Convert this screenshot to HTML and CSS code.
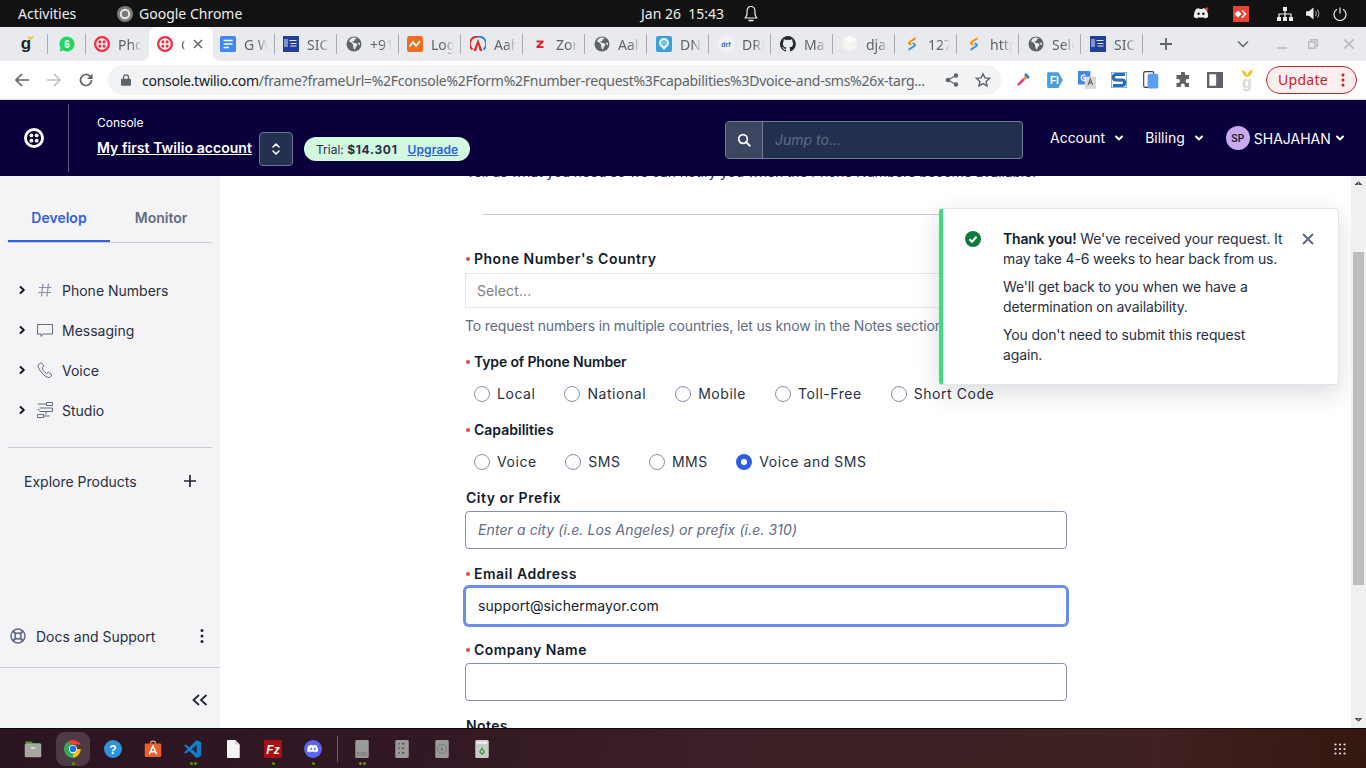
FILE: index.html
```html
<!DOCTYPE html>
<html lang="en">
<head>
<meta charset="utf-8">
<title>Twilio Console</title>
<link rel="stylesheet" href="styles.css">
</head>
<body>
<svg class="defs" width="0" height="0" aria-hidden="true">
  <defs>
    <symbol id="twilio" viewBox="0 0 16 16"><path fill="currentColor" fill-rule="evenodd" d="M8 0a8 8 0 1 0 0 16A8 8 0 0 0 8 0Zm0 13.7A5.7 5.7 0 1 1 8 2.3a5.7 5.7 0 0 1 0 11.4Z"/><circle fill="currentColor" cx="5.9" cy="5.9" r="1.55"/><circle fill="currentColor" cx="10.1" cy="5.9" r="1.55"/><circle fill="currentColor" cx="5.9" cy="10.1" r="1.55"/><circle fill="currentColor" cx="10.1" cy="10.1" r="1.55"/></symbol>
    <symbol id="globe" viewBox="0 0 16 16"><circle cx="8" cy="8" r="7.5" fill="#5f6368"/><path fill="#e8eaed" d="M7 1.6 4.2 3 3 5.6l2.6 1.2 1.4 1.8 .2 2.4 1 2.6.9-.3.8-2.4 1.7-1.9-1.2-1.7-2.9-.6L6 5.6l2.2-.4L9 3.2l1.9-.8A6.8 6.8 0 0 0 7 1.6Zm6.5 5-1.7.3.9 1.6.9.9.5-1.2a6 6 0 0 0-.6-1.6Z"/></symbol>
    <symbol id="swirl" viewBox="0 0 16 16"><path fill="#f29111" d="M11.5 1 5 5.2c-1.5 1-1.3 2.6 0 3.4l1.5.9 1.6-1L6.6 7.6c-.4-.3-.4-.7 0-1l4.9-3.2Z"/><path fill="#3a9bdc" d="M4.5 15 11 10.8c1.5-1 1.3-2.6 0-3.4l-1.5-.9-1.6 1 1.5.9c.4.3.4.7 0 1l-4.9 3.2Z"/></symbol>
    <symbol id="sic" viewBox="0 0 16 16"><rect width="16" height="16" fill="#22409a"/><path stroke="#dfe6f5" stroke-width="1" fill="none" d="M2 3v8M4 3v8M6.500 4.500h7M7.500 7.500h6M7.500 10h6"/></symbol>
    <symbol id="chev" viewBox="0 0 10 10"><path d="M2 3.500 5 6.500l3-3" fill="none" stroke="currentColor" stroke-width="2" stroke-linecap="round" stroke-linejoin="round"/></symbol>
    <symbol id="chevr" viewBox="0 0 10 10"><path d="M3.500 2 6.800 5 3.500 8" fill="none" stroke="currentColor" stroke-width="2" stroke-linecap="round" stroke-linejoin="round"/></symbol>
  </defs>
</svg>

<header class="os-bar">
  <span class="os-activities">Activities</span>
  <span class="os-app">
    <svg class="i16" viewBox="0 0 16 16"><circle cx="8" cy="8" r="8" fill="#7b7b7b"/><circle cx="8" cy="8" r="4.200" fill="none" stroke="#e8e8e8" stroke-width="2"/></svg>
    Google Chrome
  </span>
  <span class="os-clock">Jan 26&nbsp; 15:43</span>
  <svg class="os-bell" viewBox="0 0 16 18"><path d="M8 1.500c-3 0-4 2.500-4 5v3L2.300 13h11.400L12 9.500v-3c0-2.500-1-5-4-5Z" fill="none" stroke="#eee" stroke-width="1.200"/><path d="M5.500 15.500h5" stroke="#eee" stroke-width="1.600"/></svg>
  <span class="os-tray">
    <svg class="tray-discord" viewBox="0 0 18 14"><path fill="#eee" d="M3.400 2C5 1 6.500.9 7 1.200l.4.700h3.200l.4-.7c.6-.3 2 0 3.600.8 1.800 3 2.600 6 2.400 9-1.400 1-2.700 1.500-3.800 1.700l-.9-1.400c.6-.2 1-.4 1.500-.7-2.800 1.300-6.800 1.300-9.600 0 .5.300 1 .5 1.500.7l-.9 1.400C3.600 12.500 2.300 12 .9 11 .7 8 1.600 5 3.400 2Z"/><circle cx="6.300" cy="7.300" r="1.400" fill="#111"/><circle cx="11.700" cy="7.300" r="1.400" fill="#111"/><circle cx="15.500" cy="1.800" r="1.800" fill="#e53935"/></svg>
    <svg class="tray-red" viewBox="0 0 16 16"><rect width="16" height="16" fill="#ea4335"/><path fill="#fff" d="m5 4.500 3.500 3.500L5 11.500 1.500 8Z"/><path d="m9 4.500 3.500 3.500L9 11.500" fill="none" stroke="#fff" stroke-width="1.500"/></svg>
    <svg class="tray-net" viewBox="0 0 16 14"><path fill="#eee" d="M6 0h4v4H6zM0 10h4v4H0zM12 10h4v4h-4zM6 10h4v4H6z"/><path d="M8 4v6M2 10V7h12v3" fill="none" stroke="#eee" stroke-width="1.200"/></svg>
    <svg class="tray-vol" viewBox="0 0 16 14"><path fill="#eee" d="M0 4.500h3L8 .5v13l-5-4H0Z"/><path d="M10 4.500a3.500 3.500 0 0 1 0 5M12 2.500a6.500 6.500 0 0 1 0 9" fill="none" stroke="#999" stroke-width="1.200"/></svg>
    <svg class="tray-pow" viewBox="0 0 14 14"><path d="M4 2.300a6 6 0 1 0 6 0M7 .5v6" fill="none" stroke="#eee" stroke-width="1.200"/></svg>
  </span>
</header>

<div class="tabstrip">
  <div class="tab pin-g">
    <svg class="fav-g-svg" viewBox="0 0 18 18"><text x="8" y="14" class="fav-g">g</text><path d="M10.500 4.500 9.500 1l3 1.500L16 .5l-2 4Z" fill="#e8c93a"/></svg>
  </div>
  <div class="tab pin-w">
    <svg class="i16" viewBox="0 0 16 16"><path d="M8 .5a7.500 7.500 0 0 0-6.400 11.400L.6 15.500l3.700-1A7.500 7.500 0 1 0 8 .5Z" fill="#25d366"/><text x="8" y="11.500" class="fav-6">6</text></svg>
  </div>
  <div class="tab nosep"><svg class="i16 tw-red"><use href="#twilio"/></svg><span class="tab-t">Phone Numbers</span></div>
  <div class="tab active">
    <svg class="i16 tw-red"><use href="#twilio"/></svg><span class="tab-t">Console</span>
    <svg class="tab-x" viewBox="0 0 10 10"><path d="m1 1 8 8M9 1l-8 8" stroke="#5f6368" stroke-width="1.500"/></svg>
  </div>
  <div class="tab near7"><svg class="i16" viewBox="0 0 16 16"><rect width="16" height="16" rx="1.500" fill="#4285f4"/><path d="M3.500 4.500h9M3.500 8h9M3.500 11.500h5.500" stroke="#fff" stroke-width="1.500"/></svg><span class="tab-t">G Workspace</span></div>
  <div class="tab near8"><svg class="i16"><use href="#sic"/></svg><span class="tab-t">SICHER</span></div>
  <div class="tab"><svg class="i16"><use href="#globe"/></svg><span class="tab-t">+91 98</span></div>
  <div class="tab near8"><svg class="i16" viewBox="0 0 16 16"><rect width="16" height="16" rx="2.500" fill="#ef6c22"/><path d="m2.500 10.500 3.500-4.500 3 4 4-5" fill="none" stroke="#fff" stroke-width="1.800"/></svg><span class="tab-t">Login</span></div>
  <div class="tab"><svg class="i16" viewBox="0 0 16 16"><path d="M2.500 13.500A7.200 7.200 0 0 1 8 .8" fill="none" stroke="#e02a2a" stroke-width="2"/><path d="M8 .8a7.200 7.200 0 0 1 5.500 12.700" fill="none" stroke="#2f86d6" stroke-width="2"/><path d="M8 3 3.500 15h2.700L8 8.500l1.800 6.500h2.700Z" fill="#e02a2a"/></svg><span class="tab-t">Aahaa</span></div>
  <div class="tab"><svg class="i16" viewBox="0 0 16 16"><path d="M4.500 4.500h7v2l-4 3.500h4v2h-7v-2l4-3.500h-4Z" fill="#e42527"/></svg><span class="tab-t">Zoroo</span></div>
  <div class="tab"><svg class="i16"><use href="#globe"/></svg><span class="tab-t">Aahaa</span></div>
  <div class="tab"><svg class="i16" viewBox="0 0 16 16"><rect width="16" height="16" rx="2" fill="#3aa0d8"/><circle cx="8" cy="7" r="5" fill="#e4f2f8"/><circle cx="8" cy="7" r="3" fill="#7ec3d4"/><path d="m5.500 11 2.500 3 2.500-3Z" fill="#e4f2f8"/></svg><span class="tab-t">DNS</span></div>
  <div class="tab"><svg class="i16" viewBox="0 0 16 16"><circle cx="8" cy="8" r="8" fill="#f1f3f4"/><text x="8" y="11" class="fav-drf">drf</text></svg><span class="tab-t">DRF API</span></div>
  <div class="tab"><svg class="i16" viewBox="0 0 16 16"><path fill="#24292f" d="M8 0a8 8 0 0 0-2.500 15.600c.4.100.5-.2.500-.4v-1.400c-2.200.5-2.700-1-2.700-1-.4-.9-.9-1.200-.9-1.200-.7-.5.100-.5.100-.5.800.100 1.200.8 1.200.8.700 1.200 1.900.9 2.300.7.100-.5.300-.9.500-1.100-1.800-.2-3.600-.9-3.600-4 0-.9.300-1.600.8-2.100-.1-.2-.4-1 .1-2.100 0 0 .7-.2 2.200.8a7.600 7.600 0 0 1 4 0c1.500-1 2.200-.8 2.200-.8.400 1.100.2 1.900.1 2.100.5.600.8 1.300.8 2.100 0 3.100-1.900 3.700-3.700 3.900.3.300.6.800.6 1.500v2.200c0 .2.100.5.600.4A8 8 0 0 0 8 0Z"/></svg><span class="tab-t">Main</span></div>
  <div class="tab"><svg class="i16" viewBox="0 0 16 16"><path d="M8 0 15 3.500v8.500L8 16 1 12V3.500Z" fill="#f4f4f1"/><path d="M8 7 1 3.500 8 0l7 3.500Z" fill="#fbfbf9"/></svg><span class="tab-t">django</span></div>
  <div class="tab"><svg class="i16"><use href="#swirl"/></svg><span class="tab-t">127.0.0.1</span></div>
  <div class="tab"><svg class="i16"><use href="#swirl"/></svg><span class="tab-t">https://</span></div>
  <div class="tab"><svg class="i16"><use href="#globe"/></svg><span class="tab-t">Select</span></div>
  <div class="tab"><svg class="i16"><use href="#sic"/></svg><span class="tab-t">SICHER</span></div>
  <svg class="strip-plus" viewBox="0 0 12 12"><path d="M6 0v12M0 6h12" stroke="#5f6368" stroke-width="1.800"/></svg>
  <svg class="strip-down" viewBox="0 0 12 8"><path d="m1 1.500 5 5 5-5" fill="none" stroke="#5f6368" stroke-width="1.500"/></svg>
  <svg class="win-min" viewBox="0 0 10 2"><path d="M0 1h10" stroke="#b8babd" stroke-width="1.500"/></svg>
  <svg class="win-max" viewBox="0 0 10 10"><path d="M3 3V.7h6.300V7H7M.7 3h6.300v6.300H.7Z" fill="none" stroke="#b8babd" stroke-width="1.400"/></svg>
  <svg class="win-close" viewBox="0 0 10 10"><path d="m.5.500 9 9M9.500.5l-9 9" stroke="#b8babd" stroke-width="1.600"/></svg>
</div>

<div class="toolbar">
  <span class="tb"><svg class="i16" viewBox="0 0 16 16"><path d="M15 8H2M8 2 2 8l6 6" fill="none" stroke="#5f6368" stroke-width="1.700"/></svg></span>
  <span class="tb"><svg class="i16" viewBox="0 0 16 16"><path d="M1 8h13M8 2l6 6-6 6" fill="none" stroke="#bdc1c6" stroke-width="1.700"/></svg></span>
  <span class="tb"><svg class="i16" viewBox="0 0 16 16"><path d="M13.500 8a5.500 5.500 0 1 1-1.600-3.900L14 6" fill="none" stroke="#5f6368" stroke-width="1.700"/><path d="M14.500 1.500v5.500H9Z" fill="#5f6368"/></svg></span>
  <div class="omni">
    <svg class="omni-lock" viewBox="0 0 10 12"><path d="M2.500 5V3.300a2.500 2.500 0 0 1 5 0V5" fill="none" stroke="#5f6368" stroke-width="1.300"/><rect y="4.800" width="10" height="7" rx="1" fill="#5f6368"/></svg>
    <span class="omni-url"><b>console.twilio.com</b>/frame?frameUrl=%2Fconsole%2Fform%2Fnumber-request%3Fcapabilities%3Dvoice-and-sms%26x-targ...</span>
    <svg class="omni-share" viewBox="0 0 14 14"><circle cx="11" cy="2.500" r="2.200" fill="#5f6368"/><circle cx="3" cy="7" r="2.200" fill="#5f6368"/><circle cx="11" cy="11.500" r="2.200" fill="#5f6368"/><path d="M11 2.500 3 7l8 4.500" fill="none" stroke="#5f6368" stroke-width="1.300"/></svg>
    <svg class="omni-star" viewBox="0 0 16 16"><path d="m8 1.800 1.900 4.100 4.500.5-3.300 3 .9 4.400L8 11.600l-4 2.200.9-4.400-3.300-3 4.500-.5Z" fill="none" stroke="#5f6368" stroke-width="1.400"/></svg>
  </div>
  <div class="exts">
    <span class="tb"><svg class="i16" viewBox="0 0 16 16"><path d="m2 14 1-3 5-5 2 2-5 5Z" fill="#e8487c"/><path d="m8 6 3-3 2 2-3 3Z" fill="#e8873a"/><path d="m10 2 4 4" stroke="#2f80c8" stroke-width="2.500"/></svg></span>
    <span class="tb"><svg class="i18" viewBox="0 0 16 16"><path d="M2 1h9l4 7-4 7H2a1 1 0 0 1-1-1V2a1 1 0 0 1 1-1Z" fill="#4a9fdc"/><text x="7.500" y="11.800" class="ext-fi">FI</text></svg></span>
    <span class="tb"><svg class="i18" viewBox="0 0 16 16"><rect width="11" height="12" fill="#4285f4"/><rect x="6" y="5" width="10" height="11" fill="#d9d9d9"/><path d="M9 12.500 11 7l2 5.500M9.800 10.500h2.500" fill="none" stroke="#666" stroke-width="1"/><path d="M8 3.500A2.500 2.500 0 1 0 8 8V5.800H5.800" fill="none" stroke="#fff" stroke-width="1.200" transform="translate(-1.500 .3)"/></svg></span>
    <span class="tb"><svg class="i16" viewBox="0 0 16 16"><rect width="16" height="16" fill="#fff" stroke="#2d6cb0" stroke-width="1"/><path d="M14 2.500H5C1.500 2.500 1.500 8 5 8h6c3.500 0 3.500 5.500 0 5.500H2" fill="none" stroke="#2d6cb0" stroke-width="3.200"/></svg></span>
    <span class="tb"><svg class="i18" viewBox="0 0 16 16"><rect x="1.500" y=".5" width="9" height="14" rx="1.500" fill="#fff" stroke="#3c4043"/><rect x="5" y="2.500" width="9.500" height="13" rx="1.500" fill="#5b9df0"/></svg></span>
    <span class="tb"><svg class="i16" viewBox="0 0 16 16"><path fill="#5f6368" d="M6 1.500a2 2 0 0 1 4 0V3h4v4h-1.500a2 2 0 0 0 0 4H14v4H9.800v-1.500a2 2 0 0 0-4 0V15H1.500v-4H3a2 2 0 0 0 0-4H1.500V3H6Z"/></svg></span>
    <span class="tb"><svg class="i16" viewBox="0 0 14 14"><path fill="#5f6368" fill-rule="evenodd" d="M0 0h14v14H0Zm2 2v10h6V2Z"/></svg></span>
    <span class="tb"><svg class="ext-g-svg" viewBox="0 0 16 22"><path d="M8 8C6 8 3.500 5 3 1c3 .5 5 3.500 5 7Zm0 0c0-4 2.500-6 5.500-7.500C14 4 11 8 8 8Z" fill="#f0c419"/><text x="8" y="19" class="ext-g">g</text></svg></span>
  </div>
  <div class="update"><span class="update-t">Update</span>
    <svg class="update-dots" viewBox="0 0 4 14"><circle cx="2" cy="2" r="1.500"/><circle cx="2" cy="7" r="1.500"/><circle cx="2" cy="12" r="1.500"/></svg>
  </div>
</div>

<div class="tw-header">
  <svg class="tw-logo"><use href="#twilio"/></svg>
  <div class="tw-account">
    <span class="tw-console">Console</span>
    <a class="tw-name">My first Twilio account</a>
  </div>
  <span class="tw-switch"><svg viewBox="0 0 8 14" width="8" height="14"><path d="M1 5 4 2l3 3M1 9l3 3 3-3" fill="none" stroke="#fff" stroke-width="1.500" stroke-linecap="round" stroke-linejoin="round"/></svg></span>
  <div class="tw-trial">Trial: <b>$14.301</b><a>Upgrade</a></div>
  <div class="tw-search">
    <span class="tw-search-ic"><svg viewBox="0 0 14 14" width="14" height="14"><circle cx="6" cy="6" r="4.300" fill="none" stroke="#fff" stroke-width="1.700"/><path d="m9.200 9.200 3.500 3.500" stroke="#fff" stroke-width="1.900" stroke-linecap="round"/></svg></span>
    <span class="tw-search-ph">Jump to...</span>
  </div>
  <span class="tw-menu m-account">Account<svg class="chev-s"><use href="#chev"/></svg></span>
  <span class="tw-menu m-billing">Billing<svg class="chev-s"><use href="#chev"/></svg></span>
  <span class="tw-avatar">SP</span>
  <span class="tw-menu m-user">SHAJAHAN<svg class="chev-s"><use href="#chev"/></svg></span>
</div>

<div class="main">
  <aside class="side">
    <div class="side-tabs">
      <span class="side-tab on">Develop</span>
      <span class="side-tab">Monitor</span>
    </div>
    <nav class="side-nav">
      <div class="nav-item"><svg class="nav-chev"><use href="#chevr"/></svg><svg class="nav-ic" viewBox="0 0 16 16"><path d="M6 1.500 4.500 14.500M11.500 1.500 10 14.500M1.800 5.500h12.700M1.200 10.500h12.700" fill="none" stroke="#8891aa" stroke-width="1.200"/></svg>Phone Numbers</div>
      <div class="nav-item"><svg class="nav-chev"><use href="#chevr"/></svg><svg class="nav-ic" viewBox="0 0 16 16"><path d="M.5 2.500h15v9.500H6l-2 2.500V12H.5Z" fill="none" stroke="#606b85" stroke-width="1"/></svg>Messaging</div>
      <div class="nav-item"><svg class="nav-chev"><use href="#chevr"/></svg><svg class="nav-ic" viewBox="0 0 16 16"><path d="M3.800.8 1 3c-.5 1.500 1.500 5 4 8s5.500 4.800 7.500 4.500l2.500-2.300-3.500-3-2 1.300c-1.200-.5-2.300-1.800-3.200-3S5.500 6 5.500 5l1.600-1.300Z" fill="none" stroke="#606b85" stroke-width="1"/></svg>Voice</div>
      <div class="nav-item"><svg class="nav-chev"><use href="#chevr"/></svg><svg class="nav-ic" viewBox="0 0 16 16"><path d="M9.500.5h6v3h-6ZM.5 2h9M2.500 6h13v3.500h-13M.5 7.800h2M.5 12.500h6v3h-6ZM6.500 14h6M9 9.500v3" fill="none" stroke="#606b85" stroke-width="1"/></svg>Studio</div>
    </nav>
    <div class="side-rule"></div>
    <div class="explore">Explore Products<svg viewBox="0 0 12 12" width="12" height="12"><path d="M6 0v12M0 6h12" stroke="#1f2535" stroke-width="1.700"/></svg></div>
    <div class="docs">
      <svg class="docs-ic" viewBox="0 0 16 16"><circle cx="8" cy="8" r="7" fill="none" stroke="#606b85" stroke-width="1.500"/><circle cx="8" cy="8" r="3" fill="none" stroke="#606b85" stroke-width="1.500"/><path d="m3 3 3 3M13 3l-3 3M3 13l3-3M13 13l-3-3" stroke="#606b85" stroke-width="2"/></svg>
      <span>Docs and Support</span>
      <svg class="docs-more" viewBox="0 0 4 16"><circle cx="2" cy="2.500" r="1.500"/><circle cx="2" cy="8" r="1.500"/><circle cx="2" cy="13.500" r="1.500"/></svg>
    </div>
    <div class="collapse"><svg viewBox="0 0 16 12" width="16" height="12"><path d="M7 1 1.500 6 7 11M14.500 1 9 6l5.500 5" fill="none" stroke="#1f2535" stroke-width="1.800"/></svg></div>
  </aside>

  <section class="content">
    <form class="form">
      <p class="intro">Tell us what you need so we can notify you when the Phone Numbers become available.</p>
      <div class="rule"></div>
      <div class="lbl req ls5">Phone Number's Country</div>
      <div class="select">Select...</div>
      <p class="help">To request numbers in multiple countries, let us know in the Notes section.</p>
      <div class="lbl req gap16 lsn">Type of Phone Number</div>
      <div class="radios">
        <span class="radio">Local</span><span class="radio">National</span><span class="radio">Mobile</span><span class="radio">Toll-Free</span><span class="radio">Short Code</span>
      </div>
      <div class="lbl req gap16">Capabilities</div>
      <div class="radios tight">
        <span class="radio">Voice</span><span class="radio">SMS</span><span class="radio">MMS</span><span class="radio on">Voice and SMS</span>
      </div>
      <div class="lbl gap16 ls5">City or Prefix</div>
      <input class="txt" type="text" placeholder="Enter a city (i.e. Los Angeles) or prefix (i.e. 310)">
      <div class="lbl req gap15 ls5">Email Address</div>
      <input class="txt focus" type="text" value="support@sichermayor.com">
      <div class="lbl req gap15 ls4">Company Name</div>
      <input class="txt" type="text">
      <div class="lbl gap15 ls4">Notes</div>
    </form>
    <div class="toast">
      <svg class="toast-ok" viewBox="0 0 16 16"><circle cx="8" cy="8" r="8" fill="#0e7c3a"/><path d="m4.500 8.300 2.500 2.400 4.500-4.900" fill="none" stroke="#fff" stroke-width="2"/></svg>
      <div class="toast-body">
        <p><b>Thank you!</b> We've received your request. It may take 4-6 weeks to hear back from us.</p>
        <p>We'll get back to you when we have a determination on availability.</p>
        <p>You don't need to submit this request again.</p>
      </div>
      <svg class="toast-x" viewBox="0 0 12 12"><path d="m1 1 10 10M11 1 1 11" stroke="#606b85" stroke-width="2"/></svg>
    </div>
  </section>

  <div class="scroll">
    <span class="sb-up"></span>
    <span class="sb-thumb"></span>
    <span class="sb-down"></span>
  </div>
</div>

<footer class="dock">
  <span class="dk">
    <svg class="d18" viewBox="0 0 24 24"><path d="M2 2h8l2 2h10v4H2Z" fill="#4d9a3a"/><rect x="1" y="5" width="22" height="18" rx="1.500" fill="#a5a8a0"/><path d="M9 10.500h6" stroke="#fff" stroke-width="1.400"/></svg>
  </span>
  <span class="dk dk-on">
    <svg class="d18" viewBox="0 0 24 24"><path d="M12 12 6.800 1.200A12 12 0 0 1 22.400 6H12Z" fill="#ea4335"/><path d="M12 12h10.400a12 12 0 0 1-10.500 12Z" fill="#fbbc05"/><path d="M12 12l-.1 12A12 12 0 0 1 6.800 1.200Z" fill="#34a853"/><circle cx="12" cy="12" r="5.500" fill="#fff"/><circle cx="12" cy="12" r="4.300" fill="#1a73e8"/></svg>
    <i class="dot"></i>
  </span>
  <span class="dk">
    <svg class="d18" viewBox="0 0 24 24"><circle cx="12" cy="12" r="12" fill="#2f92dc"/><text x="12" y="18" class="dk-q">?</text></svg>
  </span>
  <span class="dk">
    <svg class="d18" viewBox="0 0 24 24"><path d="M8.500 5a3.500 3.500 0 0 1 7 0" fill="none" stroke="#e7a07a" stroke-width="1.500"/><rect x="1" y="4.500" width="22" height="18" rx="1.500" fill="#e9602c"/><path d="M7 19 12 8l5 11M8.500 15.500h7" fill="none" stroke="#fff" stroke-width="2"/></svg>
  </span>
  <span class="dk">
    <svg class="d18" viewBox="0 0 24 24"><path d="M17 0 23 3v18l-6 3L7 14.500 2.500 18 0 16.700 5 12 0 7.300 2.500 6 7 9.500Z" fill="#0f7fcc"/><path d="M17 6.500 10.300 12l6.700 5.500Z" fill="#2f2030"/></svg>
    <i class="dot dbl"></i>
  </span>
  <span class="dk">
    <svg class="d18" viewBox="0 0 24 24"><path d="M5 0h10l6 6v17a1 1 0 0 1-1 1H5a1 1 0 0 1-1-1V1a1 1 0 0 1 1-1Z" fill="#f4f4f4"/><path d="M15 0l6 6h-6Z" fill="#c8c8c8"/></svg>
  </span>
  <span class="dk">
    <svg class="d18" viewBox="0 0 24 24"><rect width="24" height="24" fill="#a80f14"/><text x="12" y="18" class="dk-fz">Fz</text></svg>
    <i class="dot"></i>
  </span>
  <span class="dk">
    <svg class="d18" viewBox="0 0 24 24"><circle cx="12" cy="12" r="12" fill="#5865f2"/><path fill="#fff" d="M7.200 7.200c1.300-.6 2.300-.8 3-.9l.3.6h3l.3-.6c.8.100 1.800.3 3 .9 1.500 2.300 2.200 5 2 7.800-1.200.9-2.400 1.400-3.400 1.700l-.8-1.200.9-.5c-2.300 1-5.800 1-8 0l.9.500-.8 1.200c-1-.3-2.200-.8-3.400-1.700-.2-2.800.5-5.500 2-7.800Z"/><circle cx="9.700" cy="11.800" r="1.400" fill="#5865f2"/><circle cx="14.300" cy="11.800" r="1.400" fill="#5865f2"/></svg>
    <i class="dot"></i>
  </span>
  <span class="dock-sep"></span>
  <span class="dk">
    <svg class="d18" viewBox="0 0 24 24"><rect x="3" y="0" width="18" height="24" rx="2" fill="#9a9a98"/><text x="12" y="21" class="dk-ssd">SSD</text></svg>
    <i class="dot dbl"></i>
  </span>
  <span class="dk">
    <svg class="d18" viewBox="0 0 24 24"><rect x="3" y="0" width="18" height="24" rx="2" fill="#9a9a98"/><path d="M7 5h2M7 11h2M7 17h2M12 5h3M12 11h3M12 17h3" stroke="#555" stroke-width="1.800"/></svg>
  </span>
  <span class="dk">
    <svg class="d18" viewBox="0 0 24 24"><rect x="3" y="0" width="18" height="24" rx="2" fill="#9a9a98"/><circle cx="12" cy="12" r="6" fill="none" stroke="#777" stroke-width="1.300"/><circle cx="12" cy="12" r="1.800" fill="#777"/></svg>
  </span>
  <span class="dk">
    <svg class="d18" viewBox="0 0 24 24"><rect x="3" y="0" width="18" height="24" rx="2" fill="#c9ccc6"/><rect x="5" y="2" width="14" height="3" fill="#eee"/><path d="M9 16l3-5 3 5-3 3Z" fill="none" stroke="#3a9b35" stroke-width="1.800"/></svg>
  </span>
  <svg class="dock-grid" viewBox="0 0 12 12"><g fill="#e8e8e8"><circle cx="1.500" cy="1.500" r="1.100"/><circle cx="6" cy="1.500" r="1.100"/><circle cx="10.500" cy="1.500" r="1.100"/><circle cx="1.500" cy="6" r="1.100"/><circle cx="6" cy="6" r="1.100"/><circle cx="10.500" cy="6" r="1.100"/><circle cx="1.500" cy="10.500" r="1.100"/><circle cx="6" cy="10.500" r="1.100"/><circle cx="10.500" cy="10.500" r="1.100"/></g></svg>
</footer>
</body>
</html>
```

FILE: styles.css
```css
*, *::before, *::after { box-sizing: border-box; }
html, body { margin: 0; height: 100%; }
body {
  width: 1366px; height: 768px; overflow: hidden;
  display: flex; flex-direction: column;
  font-family: Inter, "Liberation Sans", sans-serif;
  font-size: 14px; color: #121c2d; background: #fff;
}
p { margin: 0; }
svg { display: block; flex: none; }
.defs { position: absolute; }
.i16 { width: 16px; height: 16px; }
.i18 { width: 18px; height: 18px; }
.d18 { width: 18px; height: 18px; }

/* OS bar */
.os-bar {
  height: 27px; flex: none; background: #121212; color: #eee;
  display: flex; align-items: center; padding-left: 18px;
  font-family: "Noto Sans", sans-serif; font-size: 14px;
}
.os-activities { width: 99px; }
.os-app { display: flex; align-items: center; gap: 6px; width: 524px; }
.os-clock { width: 102px; white-space: nowrap; }
.os-bell { width: 16px; height: 18px; }
.os-tray { display: flex; align-items: center; margin-left: auto; }
.tray-discord { width: 16px; height: 13px; margin-right: 24px; }
.tray-red { width: 16px; height: 16px; margin-right: 28px; }
.tray-net { width: 16px; height: 14px; margin-right: 13px; }
.tray-vol { width: 15px; height: 13px; margin-right: 12px; }
.tray-pow { width: 14px; height: 14px; margin-right: 19px; }

/* tabs */
.tabstrip {
  height: 34px; flex: none; background: #e8eaed;
  display: flex; align-items: stretch; padding-left: 8px;
  font-family: "Noto Sans", sans-serif; font-size: 14px; color: #5f6368;
}
.tab {
  width: 62px; display: flex; align-items: center; gap: 8px; padding: 0 7px 0 9px;
  background: linear-gradient(#a9abae, #a9abae) right 50% / 1px 20px no-repeat;
  position: relative;
}
.tab.near7 { padding-left: 7px; }
.tab.near8 { padding-left: 8px; }
.tab.pin-g { width: 40px; padding-left: 10px; }
.fav-g-svg { width: 18px; height: 18px; }
.tab.pin-w { width: 38px; padding-left: 11px; }
.tab.nosep { width: 63px; background: none; padding-left: 8px; }
.tab.active { width: 64px; background: #fff; border-radius: 8px 8px 0 0; padding-left: 8px; gap: 8px; padding-right: 10px; }
.tab.active::before, .tab.active::after {
  content: ""; position: absolute; bottom: 0; width: 8px; height: 8px;
}
.tab.active::before { left: -8px; background: radial-gradient(circle at 0 0, transparent 8px, #fff 8.5px); }
.tab.active::after { right: -8px; background: radial-gradient(circle at 100% 0, transparent 8px, #fff 8.5px); }
.tab-t {
  flex: 1; min-width: 0; overflow: hidden; white-space: nowrap;
  -webkit-mask-image: linear-gradient(90deg, #000 55%, transparent);
  mask-image: linear-gradient(90deg, #000 55%, transparent);
}
.tab-x { width: 10px; height: 10px; }
.tw-red { color: #f22f46; }
.fav-g { font: 700 17px "Liberation Sans", sans-serif; text-anchor: middle; fill: #222; }
.fav-6 { font: 700 10px "Liberation Sans", sans-serif; text-anchor: middle; fill: #fff; }
.fav-drf { font: 700 7px "Liberation Sans", sans-serif; text-anchor: middle; fill: #2a6fb0; }
.strip-plus { width: 12px; height: 12px; align-self: center; margin-left: 17px; }
.strip-down { width: 12px; height: 8px; align-self: center; margin-left: 65px; }
.win-min { width: 10px; height: 2px; align-self: center; margin-left: 28px; margin-top: 8px; }
.win-max { width: 10px; height: 10px; align-self: center; margin-left: 21px; }
.win-close { width: 10px; height: 10px; align-self: center; margin-left: 26px; }

/* toolbar */
.toolbar {
  height: 39px; flex: none; background: #fff; border-bottom: 1px solid #dadce0;
  display: flex; align-items: center; padding: 0 0 0 6px;
}
.tb { width: 32px; height: 28px; display: flex; align-items: center; justify-content: center; flex: none; }
.omni {
  width: 893px; height: 30px; margin-left: 6px; background: #f1f3f4; border-radius: 15px;
  display: flex; align-items: center; padding-left: 13px;
  font-family: "Noto Sans", sans-serif; font-size: 14px; color: #5f6368;
}
.omni-lock { width: 10px; height: 12px; }
.omni-url { width: 792px; margin-left: 11px; white-space: nowrap; overflow: hidden; letter-spacing: -.27px; }
.omni-url b { font-weight: 400; color: #202124; }
.omni-share { width: 14px; height: 14px; margin-left: 11px; }
.omni-star { width: 16px; height: 16px; margin-left: 16px; }
.exts { display: flex; margin-left: 6px; }
.ext-fi { font: 700 9px "Liberation Sans", sans-serif; text-anchor: middle; fill: #fff; }
.ext-g-svg { width: 16px; height: 22px; }
.ext-g { font: 700 16px "Liberation Sans", sans-serif; text-anchor: middle; fill: #d8d8d0; }
.update {
  width: 91px; height: 28px; margin-left: 3px; border: 1.5px solid #c5221f; border-radius: 14px;
  background: #fbeeee; color: #c5221f; display: flex; align-items: center; padding-left: 11px;
  font-family: "Noto Sans", sans-serif; font-size: 14px; letter-spacing: .3px;
}
.update-t { margin-bottom: 2px; }
.update-dots { width: 4px; height: 14px; margin-left: auto; margin-right: 11px; fill: #c5221f; }

/* Twilio header */
.tw-header {
  height: 76px; flex: none; background: #0a003c; color: #fff;
  display: flex; align-items: center; position: relative; z-index: 2;
}
.tw-logo { width: 20px; height: 20px; margin-left: 24px; color: #fff; }
.tw-account {
  height: 68px; margin-left: 24px; padding-left: 28px; border-left: 1px solid #585d7c;
  display: flex; flex-direction: column; justify-content: flex-end; padding-bottom: 14px; gap: 6px;
}
.tw-console { font-size: 12px; line-height: 18px; }
.tw-name { font-size: 14px; font-weight: 600; line-height: 20px; text-decoration: underline; white-space: nowrap; letter-spacing: .05px; }
.tw-switch {
  width: 34px; height: 34px; margin: 22px 0 0 7px; background: #243050; border: 1px solid #6b7390; border-radius: 4px;
  display: flex; align-items: center; justify-content: center;
}
.tw-trial {
  width: 166px; height: 24px; margin: 22px 0 0 11px; padding-left: 12px; background: #d2f9e0; border-radius: 12px;
  display: flex; align-items: center; color: #282f42; font-size: 12px; white-space: pre;
}
.tw-trial b { font-weight: 700; letter-spacing: .7px; }
.tw-trial a { margin-left: 10px; color: #2f5fe0; font-weight: 600; text-decoration: underline; letter-spacing: .1px; }
.tw-search {
  width: 298px; height: 38px; margin: 4px 0 0 255px; display: flex; background: #22304f;
  border: 1px solid #757e96; border-radius: 4px; overflow: hidden;
}
.tw-search-ic { width: 37px; background: #3c4660; border-right: 1px solid #757e96; display: flex; align-items: center; justify-content: center; }
.tw-search-ph { margin-left: 12px; line-height: 36px; font-style: italic; color: #606b85; }
.tw-menu { display: flex; align-items: center; white-space: nowrap; }
.chev-s { width: 10px; height: 10px; }
.m-account { margin-left: 27px; gap: 9px; margin-bottom: 1px; }
.m-billing { margin-left: 21px; gap: 9px; margin-bottom: 1px; }
.m-user { margin-left: 4px; gap: 4px; }
.tw-avatar {
  width: 24px; height: 24px; margin-left: 22px; border-radius: 50%; background: #c9a9f0; color: #121c2d;
  display: flex; align-items: center; justify-content: center; font-size: 10px; font-weight: 600;
}

/* main */
.main { flex: 1; min-height: 0; display: flex; position: relative; overflow: hidden; }
.side { width: 220px; flex: none; background: #f4f4f6; display: flex; flex-direction: column; padding: 0 8px; color: #282f42; }
.side-tabs { display: flex; margin-top: 24px; border-bottom: 1px solid #cacdd8; height: 43px; }
.side-tab { flex: 1; text-align: center; line-height: 36px; font-weight: 600; color: #606b85; height: 42px; }
.side-tab.on { color: #2f5fe0; border-bottom: 2px solid #2f5fe0; }
.side-nav { margin-top: 37px; display: flex; flex-direction: column; gap: 20px; }
.nav-item { display: flex; align-items: center; height: 20px; padding-left: 9px; }
.nav-chev { width: 10px; height: 10px; color: #121c2d; margin-right: 10px; }
.nav-ic { width: 16px; height: 16px; margin-right: 9px; }
.side-rule { height: 1px; background: #cacdd8; margin-top: 27px; }
.explore { display: flex; align-items: center; justify-content: space-between; height: 20px; margin-top: 23px; padding: 0 16px; }
.docs { display: flex; align-items: center; height: 20px; margin-top: auto; margin-left: -8px; padding-left: 10px; }
.docs-ic { width: 16px; height: 16px; margin-right: 10px; }
.docs-more { width: 4px; height: 16px; margin-left: auto; margin-right: 8px; fill: #1f2535; }
.collapse { margin: 21px -8px 0; border-top: 1px solid #cacdd8; height: 61px; display: flex; justify-content: flex-end; padding: 26px 12px 0 0; }

.content { flex: 1; position: relative; overflow: hidden; padding-left: 245px; }
.form { width: 602px; margin-top: -14px; }
.intro { line-height: 20px; white-space: nowrap; color: #282f42; padding-left: 1px; letter-spacing: -.17px; }
.rule { height: 1px; background: #cacdd8; margin: 32px 16px 34px 17px; }
.lbl { font-weight: 600; line-height: 20px; height: 20px; padding-left: 1px; }
.lbl.req { padding-left: 9px; position: relative; }
.lbl.req::before { content: ""; position: absolute; left: 1px; top: 8px; width: 4px; height: 4px; border-radius: 50%; background: #e0484f; }
.ls5 { letter-spacing: .5px; }
.ls4 { letter-spacing: .4px; }
.lsn { letter-spacing: -.15px; }
.gap16 { margin-top: 16px; }
.gap15 { margin-top: 15px; }
.select { height: 35px; margin-top: 4px; border: 1px solid #e6e6e6; padding-left: 11px; line-height: 33px; color: #808080; letter-spacing: .1px; }
.help { margin-top: 8px; line-height: 20px; color: #606b85; white-space: nowrap; letter-spacing: -.15px; }
.radios { display: flex; margin-top: 11px; height: 21px; padding: 0 0 1px 9px; gap: 29px; }
.radios.tight { gap: 28.5px; }
.radio { display: flex; align-items: center; letter-spacing: .55px; color: #282f42; gap: 7px; }
.radio::before { content: ""; width: 16px; height: 16px; margin-top: 2px; border-radius: 50%; border: 1px solid #8891aa; background: #fff; flex: none; }
.radio.on::before { border: 5px solid #2f5fe0; }
.txt {
  display: block; width: 602px; height: 38px; margin-top: 3px; border: 1px solid #8891aa; border-radius: 4px;
  padding: 0 12px 2px; font: 14px Inter, "Liberation Sans", sans-serif; letter-spacing: .1px; color: #121c2d; outline: none; background: #fff;
}
.txt::placeholder { color: #606b85; font-style: italic; opacity: 1; }
.txt.focus { box-shadow: 0 0 0 2px #6a8fe8; border-color: #6a8fe8; }

.toast {
  position: absolute; left: 719px; top: 32px; width: 400px; height: 177px;
  background: #fff; border: 1px solid #e4e5ec; border-left: 4px solid #3ddc7c; border-radius: 4px;
  box-shadow: 0 8px 24px rgba(18,28,45,.16);
  display: flex; padding: 20px 0 0 22px;
}
.toast-ok { width: 16px; height: 16px; margin-top: 2px; }
.toast-body { width: 284px; margin-left: 22px; line-height: 20px; color: #282f42; letter-spacing: -.13px; }
.toast-body p + p { margin-top: 8px; }
.toast-body b { font-weight: 600; color: #121c2d; letter-spacing: -.2px; }
.toast-x { width: 12px; height: 12px; margin: 4px 0 0 15px; }

.scroll { width: 15px; flex: none; background: #f0f0f0; position: relative; }
.sb-thumb { position: absolute; left: 2px; right: 2px; top: 76px; height: 333px; background: #bdbdbd; }
.sb-up, .sb-down { position: absolute; left: 4px; width: 7px; height: 4px; }
.sb-up { top: 5px; background: linear-gradient(to bottom right, transparent 50%, #505050 50%) left / 50% 100% no-repeat, linear-gradient(to bottom left, transparent 50%, #505050 50%) right / 50% 100% no-repeat; }
.sb-down { bottom: 6px; background: linear-gradient(to top right, transparent 50%, #505050 50%) left / 50% 100% no-repeat, linear-gradient(to top left, transparent 50%, #505050 50%) right / 50% 100% no-repeat; }

/* dock */
.dock {
  height: 40px; flex: none; border-top: 1px solid #0a0a0a;
  background: linear-gradient(100deg, #2b1520 0%, #311824 30%, #3d2027 55%, #3e2120 85%, #34170f 100%);
  display: flex; align-items: center; padding-left: 13px;
  position: relative; z-index: 2;
}
.dk { width: 40px; height: 34px; display: flex; align-items: center; justify-content: center; position: relative; flex: none; }
.dk-on { background: rgba(255,255,255,.16); border-radius: 9px; width: 34px; margin: 0 3px; }
.dot { position: absolute; bottom: 1px; left: 50%; width: 3px; height: 3px; margin-left: -1.500px; background: #4f9a10; border-radius: 50%; }
.dot.dbl { box-shadow: 4px 0 0 #4f9a10; margin-left: -3.500px; }
.dock-sep { width: 1px; height: 26px; background: #6b5a60; margin: 0 4px; flex: none; }
.dk-q { font: 700 16px "Liberation Sans", sans-serif; text-anchor: middle; fill: #fff; }
.dk-fz { font: italic 700 16px "Liberation Sans", sans-serif; text-anchor: middle; fill: #fff; }
.dk-ssd { font: 700 7px "Liberation Sans", sans-serif; text-anchor: middle; fill: #777; }
.dock-grid { width: 12px; height: 12px; margin-left: auto; margin-right: 20px; }
```
